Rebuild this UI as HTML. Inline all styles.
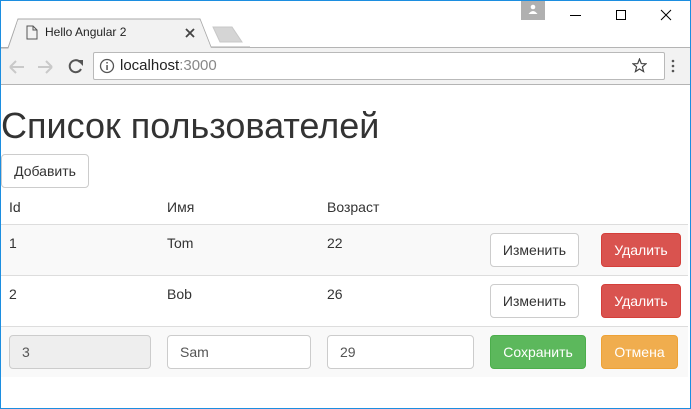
<!DOCTYPE html>
<html><head><meta charset="utf-8"><style>
*{box-sizing:border-box;margin:0;padding:0}
body{width:691px;height:409px;overflow:hidden;background:#fff;font-family:"Liberation Sans",Arial,sans-serif;position:relative;color:#333}
.a{position:absolute}
.frame{left:0;top:0;width:691px;height:409px;border:1px solid #1c8ee0;z-index:10;pointer-events:none}
.btn{position:absolute;border-radius:4px;font-size:14px;text-align:center;line-height:32px;height:34px}
.def{background:#fff;border:1px solid #ccc;color:#333}
.red{background:#d9534f;border:1px solid #d43f3a;color:#fff}
.grn{background:#5cb85c;border:1px solid #4cae4c;color:#fff}
.org{background:#f0ad4e;border:1px solid #eea236;color:#fff}
.inp{position:absolute;height:34px;border:1px solid #ccc;border-radius:4px;background:#fff;font-size:14px;line-height:32px;padding-left:12px;color:#555}
.t{position:absolute;font-size:14px;color:#333}
</style></head><body>
<div class="a frame"></div>
<div class="a" style="left:1px;top:47px;width:689px;height:38px;background:#f2f2f2;border-top:1px solid #b4b4b4;border-bottom:1px solid #b4b4b4"></div>
<svg class="a" style="left:0;top:16px" width="250" height="33"><path d="M1 32 L8 32 L18 3 L200 3 L211 31 L690 31" fill="#f2f2f2" stroke="#a9a9a9"/><path d="M9 32 L18 4 L200 4 L211 32Z" fill="#f2f2f2"/><path d="M213 11 L232 11 L242 26 L220 26Z" fill="#d5d5d5" stroke="#c8c8c8"/></svg>
<svg class="a" style="left:26px;top:25px" width="12" height="15"><path d="M1 1H7L11 5V14H1Z M7 1V5H11" fill="none" stroke="#555"/></svg>
<div class="a" style="left:45px;top:25px;font-size:12px;color:#222">Hello Angular 2</div>
<svg class="a" style="left:185px;top:28px" width="10" height="10"><path d="M1 1L9 9M9 1L1 9" stroke="#444" stroke-width="1.8"/></svg>
<div class="a" style="left:521px;top:0;width:24px;height:20px;background:#b0b0b0"></div>
<svg class="a" style="left:527px;top:3px" width="12" height="12"><circle cx="6" cy="4" r="2.3" fill="#fff"/><path d="M1.5 11Q6 5 10.5 11Z" fill="#fff"/></svg>
<div class="a" style="left:570px;top:15px;width:11px;height:1px;background:#000"></div>
<div class="a" style="left:616px;top:10px;width:10px;height:10px;border:1px solid #000"></div>
<svg class="a" style="left:660px;top:9px" width="12" height="12"><path d="M1 1L11 11M11 1L1 11" stroke="#000"/></svg>
<svg class="a" style="left:8px;top:58px" width="80" height="18"><path d="M2 9H16M2 9L8 3M2 9L8 15" stroke="#c9c9c9" stroke-width="2" fill="none"/><path d="M30 9H44M44 9L38 3M44 9L38 15" stroke="#c9c9c9" stroke-width="2" fill="none"/><path d="M72 4A6 6 0 1 0 73 11" stroke="#555" stroke-width="2" fill="none"/><path d="M69 2L75 2 75 8Z" fill="#555"/></svg>
<div class="a" style="left:93px;top:52px;width:572px;height:28px;background:#fff;border:1px solid #b9b9b9;border-radius:2px"></div>
<svg class="a" style="left:99px;top:58px" width="16" height="16"><circle cx="8" cy="8" r="6.5" fill="none" stroke="#555" stroke-width="1.3"/><rect x="7.3" y="7" width="1.5" height="5" fill="#555"/><rect x="7.3" y="4" width="1.5" height="1.5" fill="#555"/></svg>
<div class="a" style="left:120px;top:57px;font-size:15px;color:#222">localhost<span style="color:#888">:3000</span></div>
<svg class="a" style="left:632px;top:58px" width="15" height="15"><path d="M7.5 1L9.3 5.6 14 5.8 10.4 8.8 11.6 13.6 7.5 11 3.4 13.6 4.6 8.8 1 5.8 5.7 5.6Z" fill="none" stroke="#444" stroke-width="1.2"/></svg>
<svg class="a" style="left:671px;top:59px" width="4" height="14"><circle cx="2" cy="2" r="1.3" fill="#555"/><circle cx="2" cy="7" r="1.3" fill="#555"/><circle cx="2" cy="12" r="1.3" fill="#555"/></svg>
<div class="a" style="left:1px;top:104px;font-size:36px;color:#333;line-height:44px">Список пользователей</div>
<div class="btn def" style="left:1px;top:154px;width:88px">Добавить</div>
<div class="t" style="left:9px;top:199px">Id</div>
<div class="t" style="left:167px;top:199px">Имя</div>
<div class="t" style="left:327px;top:199px">Возраст</div>
<div class="a" style="left:1px;top:224px;width:687px;height:51px;background:#f9f9f9;border-top:1px solid #ddd"></div>
<div class="a" style="left:1px;top:275px;width:687px;height:51px;background:#fff;border-top:1px solid #ddd"></div>
<div class="a" style="left:1px;top:326px;width:687px;height:51px;background:#f9f9f9;border-top:1px solid #ddd"></div>
<div class="t" style="left:9px;top:235px">1</div>
<div class="t" style="left:167px;top:235px">Tom</div>
<div class="t" style="left:327px;top:235px">22</div>
<div class="btn def" style="left:490px;top:233px;width:89px">Изменить</div>
<div class="btn red" style="left:601px;top:233px;width:80px">Удалить</div>
<div class="t" style="left:9px;top:286px">2</div>
<div class="t" style="left:167px;top:286px">Bob</div>
<div class="t" style="left:327px;top:286px">26</div>
<div class="btn def" style="left:490px;top:284px;width:89px">Изменить</div>
<div class="btn red" style="left:601px;top:284px;width:80px">Удалить</div>
<div class="inp" style="left:9px;top:335px;width:142px;background:#eee">3</div>
<div class="inp" style="left:167px;top:335px;width:144px">Sam</div>
<div class="inp" style="left:327px;top:335px;width:147px">29</div>
<div class="btn grn" style="left:490px;top:335px;width:96px">Сохранить</div>
<div class="btn org" style="left:601px;top:335px;width:77px">Отмена</div>
</body></html>
